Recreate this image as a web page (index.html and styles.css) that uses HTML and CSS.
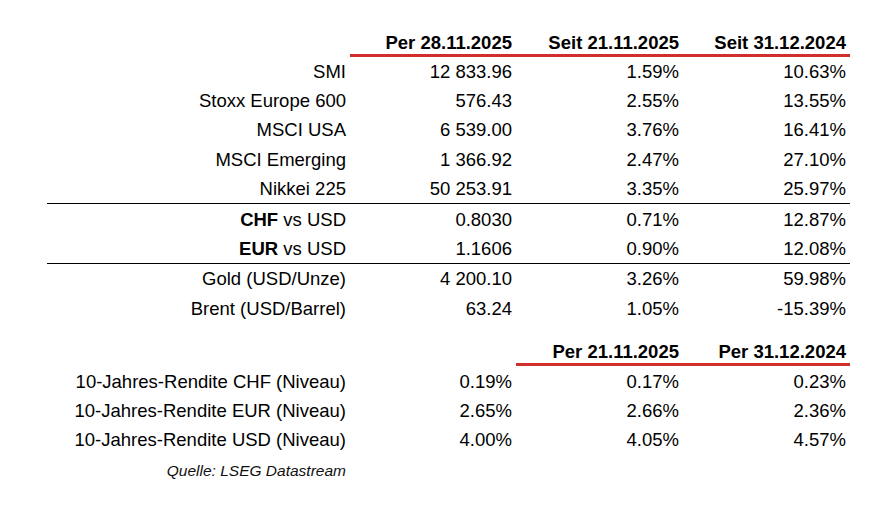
FILE: index.html
```html
<!DOCTYPE html>
<html lang="de">
<head>
<meta charset="utf-8">
<title>Marktübersicht</title>
<link rel="stylesheet" href="styles.css">
</head>
<body>
<table class="markets">
  <colgroup>
    <col class="c-label">
    <col class="c-num">
    <col class="c-num2">
    <col class="c-num2">
  </colgroup>
  <thead>
    <tr class="head">
      <th class="blank"></th>
      <th class="red">Per 28.11.2025</th>
      <th class="red">Seit 21.11.2025</th>
      <th class="red">Seit 31.12.2024</th>
    </tr>
  </thead>
  <tbody>
    <tr><td>SMI</td><td>12 833.96</td><td>1.59%</td><td>10.63%</td></tr>
    <tr><td>Stoxx Europe 600</td><td>576.43</td><td>2.55%</td><td>13.55%</td></tr>
    <tr><td>MSCI USA</td><td>6 539.00</td><td>3.76%</td><td>16.41%</td></tr>
    <tr><td>MSCI Emerging</td><td>1 366.92</td><td>2.47%</td><td>27.10%</td></tr>
    <tr class="sep"><td>Nikkei 225</td><td>50 253.91</td><td>3.35%</td><td>25.97%</td></tr>
    <tr><td><b>CHF</b> vs USD</td><td>0.8030</td><td>0.71%</td><td>12.87%</td></tr>
    <tr class="sep"><td><b>EUR</b> vs USD</td><td>1.1606</td><td>0.90%</td><td>12.08%</td></tr>
    <tr><td>Gold (USD/Unze)</td><td>4 200.10</td><td>3.26%</td><td>59.98%</td></tr>
    <tr><td>Brent (USD/Barrel)</td><td>63.24</td><td>1.05%</td><td>-15.39%</td></tr>
    <tr class="spacer"><td colspan="4"></td></tr>
    <tr class="head">
      <th class="blank"></th>
      <th class="blank"></th>
      <th class="red">Per 21.11.2025</th>
      <th class="red">Per 31.12.2024</th>
    </tr>
    <tr><td>10-Jahres-Rendite CHF (Niveau)</td><td>0.19%</td><td>0.17%</td><td>0.23%</td></tr>
    <tr><td>10-Jahres-Rendite EUR (Niveau)</td><td>2.65%</td><td>2.66%</td><td>2.36%</td></tr>
    <tr><td>10-Jahres-Rendite USD (Niveau)</td><td>4.00%</td><td>4.05%</td><td>4.57%</td></tr>
    <tr class="source"><td>Quelle: LSEG Datastream</td><td></td><td></td><td></td></tr>
  </tbody>
</table>
</body>
</html>
```

FILE: styles.css
```css
html, body {
  margin: 0;
  padding: 0;
  background: #ffffff;
}

body {
  font-family: "Liberation Sans", Arial, sans-serif;
  color: #000000;
}

.markets {
  margin: 24.5px 0 0 47px;
  width: 803px;
  table-layout: fixed;
  border-collapse: separate;
  border-spacing: 0;
  font-size: 18.5px;
  line-height: 21px;
}

.c-label { width: 303px; }
.c-num { width: 166px; }
.c-num2 { width: 167px; }

.markets th,
.markets td {
  text-align: right;
  white-space: nowrap;
  padding: 4.2px 4px 4.2px 0;
}

.markets th {
  font-weight: bold;
  padding-top: 7px;
  padding-bottom: 1px;
}

.markets th.red {
  border-bottom: 3px solid #d12f2b;
}

.markets th.blank {
  border-bottom: 3px solid transparent;
}

.markets tr.sep td {
  border-bottom: 1px solid #000000;
}

.markets tr.spacer td {
  padding: 0;
  height: 11.6px;
}

.markets tr.source td {
  padding-top: 7px;
  padding-bottom: 0;
  font-size: 15.5px;
  line-height: 18px;
  font-style: italic;
  color: #111111;
}
```
